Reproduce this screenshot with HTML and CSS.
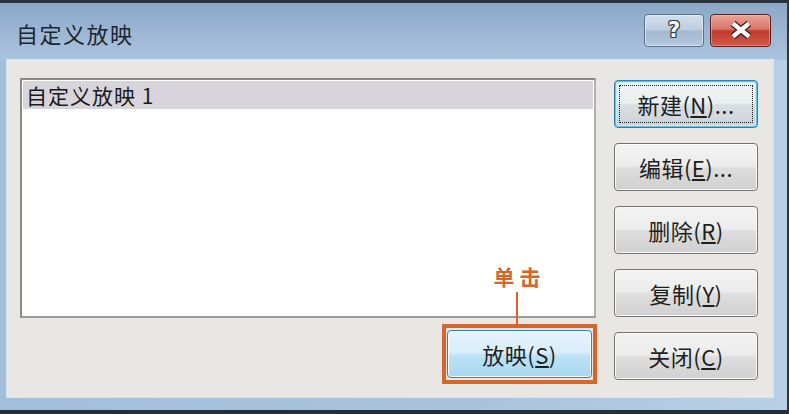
FILE: index.html
```html
<!DOCTYPE html>
<html lang="zh-CN">
<head>
<meta charset="utf-8">
<title>自定义放映</title>
<link rel="stylesheet" href="styles.css">
</head>
<body>
<div class="window">
  <div class="titlebar">
    <div class="title">自定义放映</div>
    <div class="caption-btns">
      <button class="cap help"><span>?</span></button>
      <button class="cap close">
        <svg width="26" height="20" viewBox="0 0 26 20">
          <path d="M5 3.5 L21 16.5 M21 3.5 L5 16.5" stroke="#4a1c18" stroke-width="7" fill="none"/>
          <path d="M5 3.5 L21 16.5 M21 3.5 L5 16.5" stroke="#ffffff" stroke-width="4.2" fill="none"/>
        </svg>
      </button>
    </div>
  </div>
  <div class="content">
    <div class="left">
      <div class="listbox">
        <div class="item selected">自定义放映 1</div>
      </div>
      <div class="play-row">
        <div class="play-wrap">
          <div class="callout">
            <div class="callout-label">单击</div>
            <div class="callout-line"></div>
          </div>
          <button class="btn play">放映(<u>S</u>)</button>
        </div>
      </div>
    </div>
    <div class="right">
      <button class="btn default">新建(<u>N</u>)...</button>
      <button class="btn">编辑(<u>E</u>)...</button>
      <button class="btn">删除(<u>R</u>)</button>
      <button class="btn">复制(<u>Y</u>)</button>
      <button class="btn">关闭(<u>C</u>)</button>
    </div>
  </div>
</div>
</body>
</html>
```
FILE: styles.css
```css
html, body {
  margin: 0;
  padding: 0;
  background: #1f2a33;
}

body {
  font-family: "Noto Sans CJK SC", "Noto Sans", sans-serif;
}

.window {
  box-sizing: border-box;
  width: 789px;
  height: 414px;
  border-top: 3px solid #28343f;
  border-right: 2px solid #2a3844;
  border-bottom: 4px solid #22303a;
  background: linear-gradient(90deg, #a3bedb 0%, #a9c3de 60%, #b7d0e7 100%);
  display: flex;
  flex-direction: column;
}

.titlebar {
  height: 57px;
  display: flex;
  align-items: center;
  justify-content: space-between;
  padding: 0 16px 0 16px;
  background: linear-gradient(180deg, #8aa8c8 0%, #9cb6d3 50%, #abc4de 100%);
}

.title {
  font-size: 22px;
  letter-spacing: 1.5px;
  color: #1b2633;
  padding-top: 2px;
}

.caption-btns {
  display: flex;
  gap: 6px;
  margin-top: -3px;
}

.cap {
  height: 33px;
  border-radius: 4px;
  padding: 0;
  display: flex;
  align-items: center;
  justify-content: center;
}

.help {
  width: 60px;
  border: 1px solid #5c6f86;
  background: linear-gradient(180deg, #d3dfec 0%, #bccde0 48%, #a3b8cf 52%, #b5c8dc 100%);
  box-shadow: inset 0 0 0 1px rgba(255,255,255,0.5);
}

.help span {
  font-family: "DejaVu Sans", sans-serif;
  font-weight: bold;
  font-size: 21px;
  line-height: 1;
  color: #ffffff;
  text-shadow: 1px 0 0 #2f3d4e, -1px 0 0 #2f3d4e, 0 1px 0 #2f3d4e, 0 -1px 0 #2f3d4e,
    1px 1px 0 #2f3d4e, -1px -1px 0 #2f3d4e, 1px -1px 0 #2f3d4e, -1px 1px 0 #2f3d4e;
}

.close {
  width: 61px;
  border: 1px solid #5a1f1b;
  background: linear-gradient(180deg, #e9a397 0%, #d9766a 45%, #c13b2c 52%, #d0594b 100%);
  box-shadow: inset 0 0 0 1px rgba(255,200,190,0.45);
}

.content {
  flex: 1;
  margin: 0 14px 13px 7px;
  background: #e8e7e4;
  box-shadow: 0 0 0 1px #d7e3ef;
  display: flex;
  gap: 18px;
  padding: 18px 15px 0 13px;
}

.left {
  width: 576px;
  display: flex;
  flex-direction: column;
}

.listbox {
  box-sizing: border-box;
  height: 240px;
  background: #ffffff;
  border: 2px solid #8a8a8a;
  border-right-color: #b0b0b0;
  border-bottom-color: #9a9a9a;
  padding: 1px 1px;
}

.item {
  height: 28px;
  line-height: 28px;
  font-size: 21px;
  letter-spacing: 1px;
  color: #1a1a1a;
  padding-left: 3px;
}

.item.selected {
  background: #d7d5db;
}

.play-row {
  display: flex;
  justify-content: flex-end;
  margin-top: 12px;
  padding-right: 4px;
}

.play-wrap {
  position: relative;
  display: flex;
}

.play-wrap::before {
  content: "";
  position: absolute;
  top: -6px;
  bottom: -6px;
  left: -5px;
  right: -5px;
  border: 4px solid #d9652b;
  pointer-events: none;
}

.callout {
  position: absolute;
  left: 0;
  right: 0;
  bottom: calc(100% + 6px);
  display: flex;
  flex-direction: column;
  align-items: center;
  margin-left: -5px;
}

.callout-label {
  font-size: 21px;
  font-weight: bold;
  letter-spacing: 5px;
  margin-right: -5px;
  color: #d9652b;
  line-height: 26px;
}

.callout-line {
  width: 2px;
  height: 32px;
  margin-top: 3px;
  background: #d9652b;
}

.btn {
  box-sizing: border-box;
  width: 144px;
  height: 48px;
  border: 1px solid #737373;
  border-radius: 4px;
  background: linear-gradient(180deg, #f3f3f3 0%, #ececec 48%, #dedede 52%, #d0d0d0 100%);
  box-shadow: inset 0 0 0 1px #fbfbfb;
  font-family: "Noto Sans CJK SC", "Noto Sans", sans-serif;
  font-size: 22px;
  letter-spacing: 0.5px;
  color: #1e1e1e;
  padding: 0;
  position: relative;
}

.btn u {
  text-underline-offset: 2px;
}

.btn.default {
  border-color: #2f7fa8;
  box-shadow: inset 0 0 0 1px #5fc4e8, inset 0 0 0 2px #c6ecf8;
  background: linear-gradient(180deg, #f1f5f7 0%, #e9eef1 48%, #d9dfe3 52%, #ccd3d8 100%);
}

.btn.default::after {
  content: "";
  position: absolute;
  inset: 4px;
  border: 1px dotted #1a1a1a;
  border-radius: 1px;
}

.btn.play {
  width: 145px;
  border-color: #3c7fb1;
  background: linear-gradient(180deg, #e6f3fb 0%, #d8edfa 48%, #bde3f7 52%, #a7d7f1 100%);
  box-shadow: inset 0 0 0 1px #f4fbff;
}

.right {
  width: 144px;
  display: flex;
  flex-direction: column;
  gap: 15px;
  margin-top: 2px;
}
```
